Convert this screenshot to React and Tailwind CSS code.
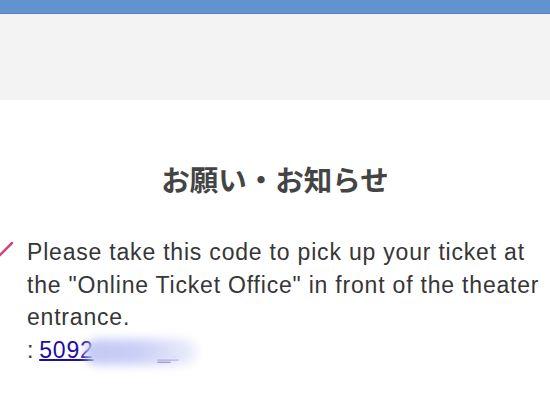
export default function App() {
  return (
    <div className="w-[550px] h-[413px] overflow-hidden bg-white" style={{ fontFamily: '"Liberation Sans", Arial, "Noto Sans CJK JP", sans-serif' }}>
      <div className="h-[13px] bg-[#6193d0]" />
      <div className="h-[1px] bg-[#5a7fb8]" />
      <div className="h-[1px] bg-[#e6f4f6]" />
      <div className="h-[85px] bg-[#f3f3f3]" />
      <div className="pt-[60px] text-center text-[28.5px] leading-[38px] font-bold text-[#444]" style={{ fontFamily: '"Noto Sans CJK JP", sans-serif' }}>
        お願い・お知らせ
      </div>
      <div className="relative mt-[38px] pl-[27px] pr-1 text-[23px] tracking-[0.8px] leading-[32.5px] text-[#363636]">
        <svg className="absolute left-0 top-[5px]" width="14" height="18" viewBox="0 0 14 18">
          <path d="M-2 16 L12 2" stroke="#d0457f" strokeWidth="2.5" strokeLinecap="round" fill="none" />
        </svg>
        <p>Please take this code to pick up your ticket at the "Online Ticket Office" in front of the theater entrance.</p>
        <p className="relative">
          :<span className="inline-block w-[5px]" /><span className="text-[#1a0dab] underline decoration-[1.5px]">5092<span className="inline-block w-[64px]">&nbsp;</span>_.</span>
          <span className="absolute left-[58px] top-[5px] w-[112px] h-[26px] rounded-full bg-gradient-to-r from-[#c3c7f4] via-[#ccd0f6] to-[#eef0fc] blur-[5px]" />
        </p>
      </div>
    </div>
  );
}
